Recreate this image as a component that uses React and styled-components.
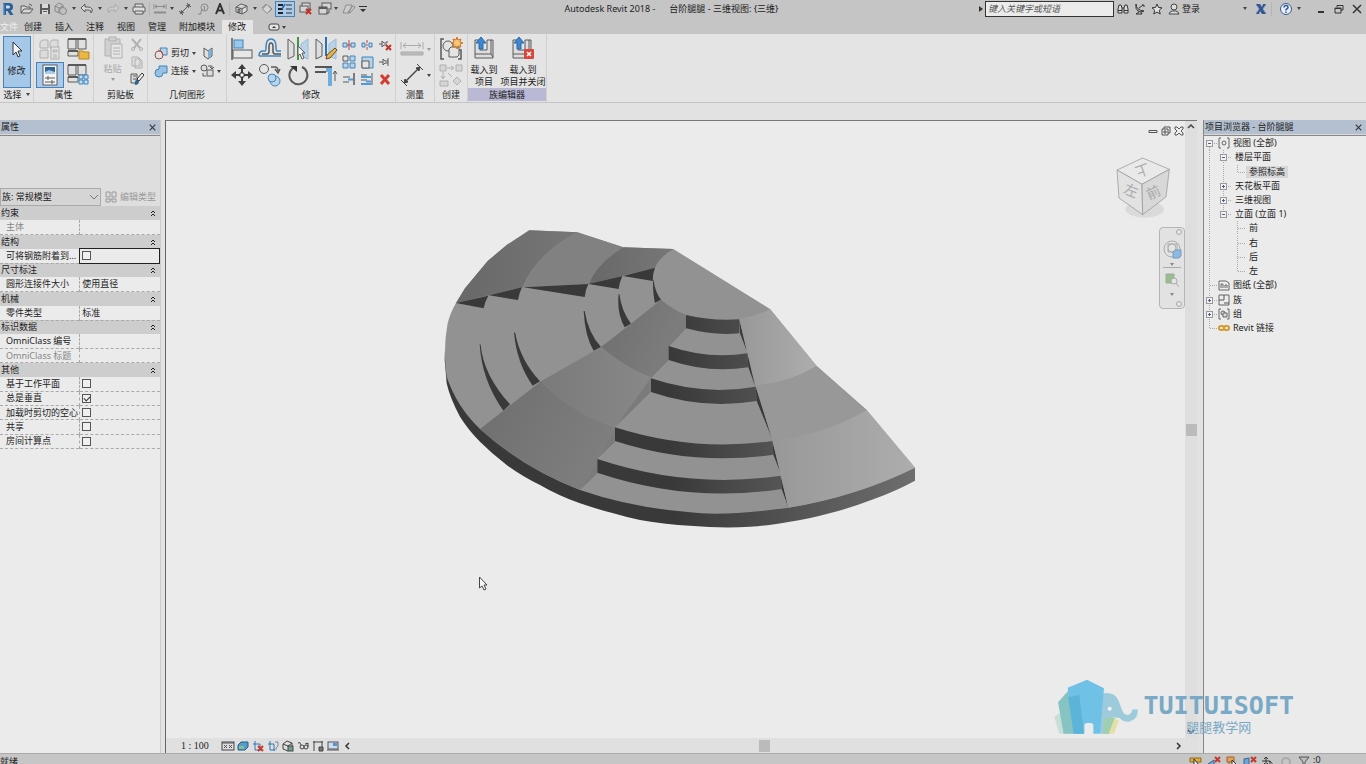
import { useState } from "react";
import styled, { createGlobalStyle } from "styled-components";

const blue = "#3f85bd";
const pale = "#b9d3e8";
const ink = "#5a5a5a";
const off = "#b0b0b0";

// cada ícone: [largura, altura, desenho]
const icons = {
    revit: [14, 14, <g><path d="M2 1h6q4 0 4 4 0 3-2.500 3.500L12.500 13H9L6.500 9H5v4H2z" fill="#28609a" /><path d="M5 3.500h2.500q1.500 0 1.500 1.500T7.500 6.500H5z" fill="#d2dce6" /><path d="M2 1l1.500 1.500V13H2z" fill="#5d9bcc" /></g>],
    open: [14, 12, <path d="M1 10V3h4l1 1h4v2M1 10l3-4h9l-3 4zM9 1l3 1.500" fill="#d8d8d8" stroke={ink} />],
    save: [12, 12, <g><path d="M1 1h9l1 1v9H1z" fill={ink} /><path d="M3 1h6v4H3zM3 7h6v4H3z" fill="#d9d9d9" /><path d="M4 8.500h4" stroke={ink} /></g>],
    package: [14, 14, <g fill="#c0c0c0" stroke="#888"><path d="M1 4l4-3 4 2v6l-4 2-4-2zM1 4l4 2 4-2M5 6v5" /><circle cx="9" cy="9" r="3.500" /></g>],
    undo: [14, 12, <path d="M5 1L1 5l4 4V7h4q2 0 2 3 2-2 1-4-1-2-4-2H5z" fill="#d8d8d8" stroke={ink} />],
    redo: [14, 12, <path d="M9 1l4 4-4 4V7H5q-2 0-2 3-2-2-1-4 1-2 4-2h3z" fill="#ccc" stroke="#aaa" />],
    print: [14, 12, <g fill="#ddd" stroke={ink}><path d="M3 4V1h8v3" /><rect x="1" y="4" width="12" height="5" rx="1" /><path d="M3 8h8v3H3z" /></g>],
    measureTop: [14, 12, <g stroke="#8d8d8d" fill="none"><path d="M1 1v5M13 1v5M2 3.500h10M4 2L2 3.500 4 5M10 2l2 1.500L10 5" /><path d="M1 9.500h12" strokeWidth="2" /></g>],
    dim: [14, 14, <g stroke={ink} fill="none"><path d="M3 11l8-8M1 9l4 4M9 1l4 4" /><path d="M2.500 11.500l1-3 2 2zM11.500 2.500l-3 1 2 2z" fill={ink} /></g>],
    tag: [12, 12, <g stroke="#888" fill="none"><circle cx="7.500" cy="4.500" r="3.500" /><path d="M1 11h3V8l1.500-1.500M6.500 3.500h1V7" /></g>],
    letter: [12, 12, <path d="M2 11L6 1l4 10M3.500 7.500h5" stroke="#333" strokeWidth="2" fill="none" />],
    cube: [14, 12, <g stroke={ink} fill="#ddd"><path d="M1 4l5-3 6 2v5l-5 3-6-2zM1 4l6 2 5-3M7 6v5" /><path d="M3 6v3l2 .5v-3z" fill="#8a9aa8" /></g>],
    section: [12, 12, <path d="M6 1.500L10.500 6 6 10.500 1.500 6zM1 5l4-4M8 3l3 3-3 3" fill="#d5d5d5" stroke="#888" />],
    thinLines: [16, 14, <g fill="none"><path d="M1 3h5M1 7h5M1 11h5" stroke="#222" strokeWidth="2" /><path d="M9 3h6M9 7h6M9 11h6" stroke="#333" /><path d="M5 7l3-5" stroke="#2a69ac" strokeWidth="1.500" /></g>],
    closeHidden: [14, 14, <g fill="#d5d5d5" stroke={ink}><rect x="3" y="1" width="8" height="6" /><rect x="1" y="4" width="8" height="6" /><path d="M7 7l5 5M12 7l-5 5" stroke="#c42f24" strokeWidth="2" /></g>],
    switchWin: [14, 14, <g fill="#d5d5d5" stroke={ink}><rect x="4" y="1" width="9" height="6" /><rect x="1" y="5" width="8" height="7" /><path d="M1 6h8" strokeWidth="2" /><path d="M11 8v3H8" fill="none" /></g>],
    brushTop: [14, 12, <path d="M1 10l3-8h6l-3 8zM6 9l5-6 2 1-5 6z" fill="#ccc" stroke="#8c8c8c" />],
    customise: [8, 8, <path d="M0 1h8v1H0zM1 4h6L4 7z" fill="#333" />],
    play: [6, 8, <path d="M1 1l4 3-4 3z" fill="#333" />],
    binocular: [12, 12, <g fill="#ddd" stroke="#333"><path d="M1 6l1-4h2l1 3v5H1zM11 6l-1-4H8L7 5v5h4zM5 5h2" /><path d="M1 7.500h4M7 7.500h4" /></g>],
    satellite: [12, 12, <g fill="none" stroke="#333"><path d="M2 1q0 6 8 7Q7 10 4 8T2 1zM5 5l4-3M9 1v2h2M5 9l-3 2h6l-1-2" /></g>],
    star: [12, 12, <path d="M6 1l1.500 3.500 3.500.3-2.700 2.400.9 3.800L6 9l-3.200 2 .9-3.800L1 4.800l3.500-.3z" fill="#e3e3e3" stroke="#333" />],
    user: [12, 12, <g fill="#ddd" stroke="#444"><circle cx="6" cy="4" r="3" /><path d="M1 11q1-3 3.500-3h3Q10 8 11 11z" /></g>],
    exchange: [12, 12, <g><path d="M1 1h4l2 3 1-3h3L8 6l3 5H7L5 8l-1 3H1l3-5z" fill="#35558f" /><path d="M1 2l3 4-3 4M11 2L8 6l3 4" stroke="#91a5cb" fill="none" /></g>],
    help: [14, 14, <g><circle cx="7" cy="7" r="5.500" fill="#e9eef4" stroke="#405a8b" /><path d="M5 5.500Q5 3.500 7 3.500t2 2Q9 6.500 7 7.500v1M7 9.500v1.500" fill="none" stroke="#2f5ca3" strokeWidth="1.500" /></g>],
    min: [8, 10, <path d="M1 8h6" stroke="#333" strokeWidth="2" />],
    restore: [10, 10, <path d="M3 3V1.500h6V6H7M1 4h6v5H1zM1 4.500h6" fill="none" stroke="#333" />],
    close: [10, 10, <path d="M1 1l8 8M9 1L1 9" stroke="#333" strokeWidth="1.500" />],
    pointer: [14, 18, <path d="M3 1v13l3-3 2 5 2-1-2-5h4z" fill="#f4f4f4" stroke="#333" />],
    typeGroup: [22, 22, <g fill="#dcdcdc" stroke={off}><path d="M1 4l2-2h6v8H1zM11 4l2-2h6v8h-8zM1 13l2-1h6v8H1z" /><rect x="12" y="9" width="8" height="12" fill="#e3e3e3" /><path d="M14 12h4v2h-4zM14 17h4M14 19h4" /></g>],
    family: [24, 24, <g fill="#e0e0e0" stroke={ink}><path d="M2 2h8v10H2zM12 2h8v10h-8zM2 14h10v5H2z" /><path d="M2 2h18M2 14h10" strokeWidth="2" /><path d="M13 14h4l1 1h5v7H13z" fill="#eab744" stroke="#b58523" /></g>],
    props: [22, 22, <g><rect x="4" y="1" width="14" height="20" fill="#f5f5f5" stroke={ink} /><path d="M6 3h10v7H6z" fill="#2d6596" /><path d="M6 8l4-2 6 2v2H6z" fill="#a9cbe5" /><path d="M6 14h10M6 18h10M9 12v4M13 16v4" stroke={ink} /></g>],
    familyTypes: [24, 24, <g fill="#e0e0e0" stroke={ink}><path d="M2 2h8v10H2zM12 2h8v10h-8zM2 14h10v5H2z" /><path d="M2 2h18M2 14h10" strokeWidth="2" /><path d="M13 12h4v4h-4zM18 12h4v4h-4zM13 17h4v4h-4zM18 17h4v4h-4z" fill="#c3dcf0" stroke={blue} /></g>],
    paste: [20, 24, <g fill="#d0d0d0" stroke={off}><path d="M2 3h15v17H2z" /><path d="M6 1h7v4H6z" /><path d="M8 8h11v14H8z" fill="#e5e5e5" /><path d="M10 12h7M10 15h7M10 18h7" /></g>],
    cut: [14, 14, <g fill="none" stroke={off}><path d="M2 1l8 9M11 1L4 10" strokeWidth="2" /><circle cx="3" cy="11" r="1.500" /><circle cx="11" cy="11" r="1.500" /></g>],
    copy: [14, 14, <path d="M2 2h6l2 2v7H2zM5 4h5l2 2v7H5z" fill="#e0e0e0" stroke={off} />],
    match: [14, 14, <g><path d="M1 2h6v9H1zM3 4h3M3 7h3" fill="#ddd" stroke={ink} /><path d="M12 1L7 7l2 2 5-6z" fill="#f3f3f3" stroke="#333" /><path d="M7 7q-3 2-2 6 4 0 4-4z" fill="#2f6591" /></g>],
    cutGeo: [14, 14, <g><path d="M6 2h7v7H8z" fill={pale} stroke={blue} /><circle cx="5" cy="9" r="4" fill="#e7e0dd" stroke="#875c58" /><path d="M4 4q4 1 5 5" stroke="#c54137" fill="none" /></g>],
    joinGeo: [14, 14, <path d="M5 2h8v7H9q0 4-4 4T1 9q0-4 4-4z" fill="#98c1e2" stroke={blue} />],
    wall: [12, 14, <g><path d="M2 2l4 3 4-3v8l-4 3-4-3z" fill="#e0e0e0" stroke={ink} /><path d="M6 5l3-2v7l-3 2z" fill="#79b2df" /></g>],
    unjoin: [14, 14, <g fill="#ddd" stroke={ink}><circle cx="4" cy="4" r="3" /><rect x="7" y="6" width="6" height="6" /><path d="M8 2h4v3M3 9v3h3M10 3l2 2 2-2" fill="none" /></g>],
    align: [24, 24, <g><path d="M2 1v22" stroke={ink} strokeWidth="1.500" /><rect x="4" y="3" width="9" height="8" fill="#9cc6ea" stroke={blue} /><rect x="3" y="13" width="19" height="8" fill="#e7e7e7" stroke={ink} /></g>],
    offset: [24, 24, <g fill="none"><path d="M1 19h22M1 19q0-5 4-5h2q1 0 1-4 0-8 5-8t5 8q0 4 1 4h4" stroke={blue} strokeWidth="1.500" /><path d="M4 17h5q2 0 2-3v-4q0-4 2-4t2 4v4q0 3 2 3h6" stroke="#555" strokeWidth="1.500" /></g>],
    mirrorPick: [24, 24, <g><path d="M2 2l6 5v12l-6 3z" fill="#dedede" stroke={ink} /><path d="M22 2l-7 5v12l7 3z" fill={pale} stroke="#9db9cf" /><path d="M12 0v23" stroke="#459348" strokeWidth="2" /><path d="M12 9v10l2-2 2 5 2-1-2-5h3z" fill="#f7f7f7" stroke={ink} /></g>],
    mirrorDraw: [24, 24, <g><path d="M2 2l6 5v12l-6 3z" fill="#dedede" stroke={ink} /><path d="M22 2l-7 5v12l7 3z" fill={pale} stroke="#9db9cf" /><path d="M12 0v19" stroke="#2872b8" strokeWidth="2" /><path d="M12 22l1-4 8-7 2 2-7 8z" fill="#e9b44c" stroke="#6b4c20" /></g>],
    move: [24, 24, <g fill="#3d3d3d"><path d="M12 1l4 5h-3v4h-2V6H8zM12 23l4-5h-3v-4h-2v4H8zM1 12l5-4v3h4v2H6v3zM23 12l-5-4v3h-4v2h4v3z" /><path d="M10 10h4v4h-4z" fill="#fff" stroke="#333" /></g>],
    copyObj: [24, 24, <g fill="none" stroke={ink}><circle cx="6" cy="6" r="4.500" /><path d="M13 4h4q3 0 3 4M17 6l3 4 2-4" strokeWidth="1.500" /><circle cx="17" cy="18" r="5" fill={pale} stroke={blue} /><circle cx="14" cy="15" r="4" fill={pale} stroke={blue} /></g>],
    rotate: [24, 24, <g><path d="M7 5a9 9 0 1 0 9-1" fill="none" stroke={ink} strokeWidth="2" /><path d="M4 3h7v6z" fill="#333" /></g>],
    trim: [24, 24, <g fill="none"><path d="M1 4h17M1 9h11" stroke="#555" strokeWidth="2" /><path d="M12 7h4v16" stroke="#6fadde" strokeWidth="4" /><path d="M21 18V8M19 11l2-3 2 3" stroke={ink} /></g>],
    splitEl: [14, 12, <g><path d="M1 4h4v4H1zM9 4h4v4H9z" fill={pale} stroke={blue} /><path d="M7 1v10M5 6h4" stroke="#bd4843" /></g>],
    splitGap: [14, 12, <g><path d="M2 4h3v4H2zM9 4h3v4H9z" fill={pale} stroke={blue} /><path d="M7 1v3M7 8v3M6 6h2" stroke="#bd4843" /></g>],
    unpin: [14, 14, <g fill="none" stroke={ink}><path d="M1 6h3M4 3v6l2-2h3M4 3l2 2h3V3" /><path d="M8 7l5 5M13 7l-5 5" stroke="#c2332a" strokeWidth="2" /></g>],
    array: [14, 14, <g fill={pale} stroke={blue}><path d="M1 1h5v5H1z" fill="#e3e3e3" stroke={ink} /><path d="M8 1h5v5H8zM1 8h5v5H1zM8 8h5v5H8z" /></g>],
    scale: [14, 14, <g><path d="M2 2h11v11H2z" fill={pale} stroke={blue} /><path d="M2 6h7v7H2z" fill="#e5e5e5" stroke={ink} /></g>],
    pin: [14, 14, <path d="M1 7h4M5 4v6l2-2h3v3M5 4l2 2h3V3M10 6v2" fill="none" stroke={ink} />],
    trimOne: [14, 14, <g><path d="M12 1v12" stroke={ink} strokeWidth="1.500" /><path d="M1 5h7M1 10h6" stroke={ink} /><path d="M6 7.500h5" stroke="#509bd7" strokeWidth="2" /></g>],
    trimMany: [14, 14, <g><path d="M12 1v12M1 3h6M1 8h6" stroke={ink} /><path d="M1 5h10M6 9.500h5M1 12h10" stroke="#509bd7" strokeWidth="2" /></g>],
    remove: [14, 14, <path d="M3 3l8 9M11 3l-8 9" stroke="#d43c31" strokeWidth="3" />],
    measure: [24, 16, <g stroke="#aaa" fill="none"><path d="M1 1v7M23 1v7M3 4.500h18M6 2L3 4.500 6 7M18 2l3 2.500L18 7" /><path d="M1 11h22v3H1z" fill="#bebebe" /></g>],
    dimBig: [24, 24, <g stroke="#444" fill="none"><path d="M4 20L20 4" strokeWidth="1.500" /><path d="M1 17l6 6M17 1l6 6" /><path d="M4 20l1-4 3 3zM20 4l-4 1 3 3z" fill="#444" /></g>],
    create: [24, 24, <g fill="#e3e3e3" stroke={ink}><path d="M5 2H2v20h3M19 13h3v9h-3" fill="none" strokeWidth="1.500" /><circle cx="9" cy="9" r="5" /><path d="M10 12l2-2h8v8l-2 2h-8z" /><path d="M18 0l1 3 3-1-1 3 3 1-3 1 1 3-3-1-1 3-1-3-3 1 1-3-3-1 3-1-1-3 3 1z" fill="#f3c779" stroke="#d17525" /></g>],
    similar: [24, 24, <g fill="#d5d5d5" stroke={off}><path d="M1 2h6v6H1zM17 2h6v6h-6zM1 18h8v5H1zM18 14l4 4-4 4-4-4z" /><path d="M8 5h6M12 3l3 2-3 2M4 9v6M2 13l2 3 2-3M9 10l4 4" fill="none" /></g>],
    load: [24, 24, <g><path d="M3 4h5v10h7V4h6v18H3z" fill="#ddd" stroke={ink} /><path d="M3 18h16V4M19 18l2 3" stroke={ink} fill="none" /><path d="M9 1l5 6h-3v6H7V7H4z" fill="#3d87ce" stroke="#286aaa" /></g>],
    loadClose: [26, 24, <g><path d="M3 4h5v10h7V4h6v18H3z" fill="#ddd" stroke={ink} /><path d="M3 18h16V4" stroke={ink} fill="none" /><path d="M9 1l5 6h-3v6H7V7H4z" fill="#3d87ce" stroke="#286aaa" /><rect x="14" y="13" width="10" height="10" rx="1" fill="#d9463b" /><path d="M17 16l4 4M21 16l-4 4" stroke="#fff" strokeWidth="1.500" /></g>],
    ribbonToggle: [12, 8, <g><rect x="1" y="1" width="10" height="6" rx="2" fill="#e4e4e4" stroke="#444" /><path d="M4 5l2-2 2 2z" fill="#333" /></g>],
    editType: [12, 12, <path d="M1 1h4v5H1zM7 1h4v5H7zM1 8h4v3H1zM7 8h4v3H7zM5 8h2" fill="#ddd" stroke="#999" />],
    up2: [6, 6, <path d="M1 3l2-2 2 2M1 6l2-2 2 2" fill="none" stroke="#222" />],
    down: [10, 8, <path d="M1 2l4 4 4-4" fill="none" stroke="#777" />],
    arrowUp: [8, 8, <path d="M1 5l3-3 3 3" fill="none" stroke="#444" strokeWidth="1.500" />],
    arrowDown: [8, 8, <path d="M1 2l3 3 3-3" fill="none" stroke="#444" strokeWidth="1.500" />],
    arrowLeft: [8, 8, <path d="M5 1L2 4l3 3" fill="none" stroke="#333" strokeWidth="1.500" />],
    arrowRight: [8, 8, <path d="M2 1l3 3-3 3" fill="none" stroke="#333" strokeWidth="1.500" />],
    viewMin: [10, 10, <path d="M1 4.500h8v2H1z" fill="#eee" stroke="#555" />],
    viewRestore: [10, 10, <path d="M3 3V1h6v6H7M1 3h6v6H1zM3 5h2v2H3z" fill="none" stroke="#555" />],
    viewClose: [10, 10, <path d="M1 1h2l2 2 2-2h2v2L7 5l2 2v2H7L5 7 3 9H1V7l2-2-2-2z" fill="#eee" stroke="#555" />],
    detail: [14, 10, <g><rect x="1" y="1" width="12" height="8" fill="#ddd" stroke="#444" /><path d="M1 2h12M3 4l3 3M6 4L3 7M8 4l3 3M11 4L8 7" stroke="#555" /></g>],
    visual: [12, 12, <g><path d="M1 5l3-3h7v5l-3 3H1z" fill="#559bc2" stroke="#245d8a" /><path d="M2 6h5v3H2z" fill="#7fc196" /></g>],
    crop: [12, 12, <g fill="none"><path d="M3 1v9h5M1 4h7v7" stroke="#3277b4" /><path d="M6 6l5 5M11 6l-5 5" stroke="#c5382d" strokeWidth="2" /></g>],
    cropShow: [12, 12, <g fill="none" stroke="#3277b4"><path d="M3 1v9h5M1 4h6v7" /><path d="M8 2h3v4L9 8v2" stroke="#7b8793" /></g>],
    lock3d: [12, 12, <g fill="#ddd" stroke="#444"><path d="M1 4l4-3 5 2v5l-4 3-5-2zM1 4l5 2 4-3" /><rect x="6" y="6" width="5" height="5" fill="#6f9f89" /></g>],
    glasses: [12, 12, <g fill="none" stroke="#444"><path d="M1 3q2-2 3 2M8 4l3-1v4" /><circle cx="5" cy="7" r="2" /><circle cx="9" cy="7" r="2" /></g>],
    reveal: [12, 12, <g fill="none" stroke="#444"><path d="M1 2h10M2 1v10M10 1v6" /><path d="M7 7h4v4H7z" fill="#777" /></g>],
    display: [12, 10, <g><rect x="1" y="1" width="10" height="7" fill="#cde" stroke="#555" /><path d="M6 2h4v3H6z" fill="#5b91c4" /><path d="M0 9h12" stroke="#555" /></g>],
    views: [12, 12, <g fill="none" stroke="#666"><path d="M3 1H1v10h2M9 1h2v10H9" /><circle cx="6" cy="6" r="2" /></g>],
    sheets: [12, 12, <path d="M1 2h7l3 2v7H1zM3 5v4M3 5h2v4M7 9V6h2v3" fill="#eee" stroke="#666" />],
    families: [12, 12, <g><path d="M1 1h10v10H1z" fill="#eee" stroke="#666" /><path d="M6 1v5H1M6 9h5" fill="none" stroke="#555" /></g>],
    groups: [12, 12, <g fill="#ddd" stroke="#666"><path d="M3 1H1v10h2M9 1h2v10H9" fill="none" /><circle cx="5" cy="5" r="2" /><path d="M5 5h4v4H5z" /></g>],
    link: [12, 12, <g fill="none" stroke="#d59b28" strokeWidth="2"><rect x="1" y="4" width="5" height="4" rx="2" /><rect x="6" y="4" width="5" height="4" rx="2" /></g>],
    selLink: [14, 12, <g><path d="M1 2h11v4H1z" fill="#e2ae35" stroke="#8b6a1c" /><path d="M5 3v8l2-2h3z" fill="#eee" stroke="#333" /></g>],
    selUnder: [14, 12, <g><path d="M1 8l6-4v5z" fill="#6da7d9" stroke="#346692" /><path d="M8 1l5 5M13 1L8 6" stroke="#c5382d" strokeWidth="2" /></g>],
    selPin: [14, 12, <g><path d="M2 1h7v5H2zM4 6v6" fill="#e4a25d" stroke="#a65c27" /><path d="M7 4v7l2-2h3z" fill="#eee" stroke="#333" /></g>],
    selFace: [14, 12, <g><path d="M1 3l5-1v9l-5-1z" fill="#6da7d9" stroke="#346692" /><path d="M8 1l5 5M13 1L8 6" stroke="#c5382d" strokeWidth="2" /></g>],
    drag: [14, 12, <path d="M5 1v8M1 5h8M3 3l2-2 2 2M3 7l2 2 2-2M9 5v7l2-2h2z" fill="#eee" stroke="#333" />],
    gear: [12, 12, <circle cx="6" cy="6" r="4" fill="none" stroke="#aaa" strokeWidth="2" />],
    filter: [12, 12, <path d="M1 1h10L7 6v5L5 9V6z" fill="#bbb" stroke="#555" />],
};

function Icon({ name }) {
    const [width, height, drawing] = icons[name];
    return <svg width={width} height={height} viewBox={`0 0 ${width} ${height}`} aria-hidden="true">{drawing}</svg>;
}

// barra de acesso rápido: [ícone, rótulo, largura]
const quickTools = [
    ["revit", "应用程序", 16], ["open", "打开", 22], ["save", "保存", 13], ["package", "同步", 20], ["caret", "同步选项", 6],
    ["undo", "放弃", 20], ["caret", "放弃列表", 6], ["redo", "重做", 20], ["caret", "重做列表", 6], ["print", "打印", 20], ["sep", "", 2],
    ["measureTop", "测量", 18], ["caret", "测量选项", 6], ["dim", "尺寸标注", 20], ["tag", "标记", 16], ["letter", "文字", 18], ["sep", "", 4],
    ["cube", "三维视图", 18], ["caret", "三维选项", 8], ["section", "剖面", 16], ["thinLines", "细线", 20],
    ["closeHidden", "关闭隐藏窗口", 22], ["switchWin", "切换窗口", 16], ["caret", "窗口列表", 6], ["brushTop", "编辑", 20], ["customise", "自定义", 8],
];

const tabs = ["创建", "插入", "注释", "视图", "管理", "附加模块", "修改"];

const modifyLarge = [["align", "对齐"], ["offset", "偏移"], ["mirrorPick", "镜像拾取轴"], ["mirrorDraw", "镜像绘制轴"], ["move", "移动"], ["copyObj", "复制"], ["rotate", "旋转"], ["trim", "修剪"]];
const modifySmall = [["splitEl", "拆分"], ["splitGap", "间隙拆分"], ["unpin", "解锁"], ["array", "阵列"], ["scale", "缩放"], ["pin", "锁定"], ["trimOne", "修剪单个"], ["trimMany", "修剪多个"], ["remove", "删除"]];

const properties = [
    { group: "约束" },
    { label: "主体", value: "", muted: true },
    { group: "结构" },
    { label: "可将钢筋附着到...", check: false, focused: true },
    { group: "尺寸标注" },
    { label: "圆形连接件大小", value: "使用直径" },
    { group: "机械" },
    { label: "零件类型", value: "标准" },
    { group: "标识数据" },
    { label: "OmniClass 编号", value: "" },
    { label: "OmniClass 标题", value: "", muted: true },
    { group: "其他" },
    { label: "基于工作平面", check: false },
    { label: "总是垂直", check: true },
    { label: "加载时剪切的空心", check: false },
    { label: "共享", check: false },
    { label: "房间计算点", check: false },
];

const tree = [
    { guides: ["first-minus"], icon: "views", text: "视图 (全部)" },
    { guides: ["line", "minus"], text: "楼层平面" },
    { guides: ["line", "line", "end"], text: "参照标高", selected: true },
    { guides: ["line", "plus"], text: "天花板平面" },
    { guides: ["line", "plus"], text: "三维视图" },
    { guides: ["line", "last-minus"], text: "立面 (立面 1)" },
    { guides: ["line", "none", "tee"], text: "前" },
    { guides: ["line", "none", "tee"], text: "右" },
    { guides: ["line", "none", "tee"], text: "后" },
    { guides: ["line", "none", "end"], text: "左" },
    { guides: ["tee"], icon: "sheets", text: "图纸 (全部)" },
    { guides: ["plus"], icon: "families", text: "族" },
    { guides: ["plus"], icon: "groups", text: "组" },
    { guides: ["end"], icon: "link", text: "Revit 链接" },
];

const viewTools = [["detail", "详细程度"], ["visual", "视觉样式"], ["crop", "裁剪视图"], ["cropShow", "显示裁剪区域"], ["lock3d", "锁定三维视图"], ["glasses", "临时隐藏"], ["reveal", "显示隐藏图元"], ["display", "临时视图属性"], ["arrowLeft", "向左滚动"]];
const statusTools = [["selLink", "选择链接"], ["selUnder", "选择基线图元"], ["selPin", "选择锁定图元"], ["selFace", "按面选择"], ["drag", "选择时拖拽"], ["gear", "后台进程"], ["filter", "过滤器"]];

function ToolButton({ name, label, ...rest }) {
    return <IconButton aria-label={label} {...rest}>{name === "caret" ? <Caret /> : <Icon name={name} />}</IconButton>;
}

function Guide({ kind }) {
    const box = kind.endsWith("plus") || kind.endsWith("minus");
    const top = kind === "none" || kind === "first-minus" ? 7 : 0;
    const bottom = kind === "end" || kind === "last-minus" || kind === "none" ? 7 : 15;
    return <svg width="14" height="14" viewBox="0 0 14 14" aria-hidden="true">
        {kind !== "none" && <path d={`M5.500 ${top}V${bottom}`} stroke="#aaa" strokeDasharray="1 1" />}
        {kind !== "line" && kind !== "none" && <path d="M6 7.500h8" stroke="#aaa" strokeDasharray="1 1" />}
        {box && <rect x="2.500" y="4.500" width="6" height="6" fill="#f2f2f2" stroke="#999" />}
        {box && <path d="M4 7.500h3" stroke="#4a5f8c" />}
        {kind.endsWith("plus") && <path d="M5.500 6v3" stroke="#4a5f8c" />}
    </svg>;
}

function StairModel() {
    return <Scene viewBox="166 121 1019 617" preserveAspectRatio="xMidYMid slice" role="img" aria-label="三维视图">
        <defs>
            <linearGradient id="rim" gradientUnits="userSpaceOnUse" x1="700" x2="1425" y1="0" y2="0"><stop offset="0" stopColor="#393939" /><stop offset="1" stopColor="#6e6e6e" /></linearGradient>
            <linearGradient id="riser" gradientUnits="userSpaceOnUse" x1="690" x2="1020" y1="0" y2="0"><stop offset="0" stopColor="#393939" /><stop offset="1" stopColor="#555" /></linearGradient>
            <linearGradient id="back"><stop offset="0" stopColor="#686868" /><stop offset="1" stopColor="#777" /></linearGradient>
            <linearGradient id="slope" x2="1" y2=".4"><stop offset="0" stopColor="#6e6e6e" /><stop offset="1" stopColor="#7e7e7e" /></linearGradient>
            <linearGradient id="slopeMid"><stop offset="0" stopColor="#7a7a7a" /><stop offset="1" stopColor="#888" /></linearGradient>
            <linearGradient id="light"><stop offset="0" stopColor="#989898" /><stop offset="1" stopColor="#adadad" /></linearGradient>
        </defs>
        <g transform="translate(440 220) scale(.33333)">
            <path fill="url(#rim)" d="M15 390L14 420 20 490Q30 535 60 590 85 630 120 665 155 700 200 735 245 768 300 795 355 827 420 850 470 867 520 880 560 892 600 900 680 914 750 917 850 926 930 920 1000 915 1045 906 1110 896 1160 882 1230 865 1300 838 1370 812 1425 782V743L1045 800 400 700z" />
            <path fill="#929292" d="M48 249L75 205 143 123 200 75 268 31 412 37 550 82 700 87 990 267 1130 438 1280 570 1425 743Q1250 828 1045 863 850 890 750 877 570 862 420 810 250 745 120 627 50 560 20 470 8 390 23 310 30 280 48 249z" />
            <path fill="url(#back)" d="M48 249L75 205 143 123 200 75 268 31 412 37Q290 100 248 202L147 226z" />
            <path fill="#818181" d="M412 37L550 82Q470 130 447 192L250 202Q290 100 412 37z" />
            <path fill="url(#back)" d="M550 82L700 87Q655 115 645 143L447 192Q470 130 550 82z" />
            <g fill="#393939">
                <path d="M48 249L145 227Q134 246 131 265zM147 226L246 202Q237 220 234 240zM250 202L445 192Q436 210 434 231zM445 192L547 168Q538 188 536 207zM549 168L645 143Q638 160 638 183z" />
                <path d="M119 372Q125 480 190 572L210 553Q130 465 122 374zM222 337Q230 430 278 497L300 484Q240 420 226 340zM431 273Q435 350 461 392L483 381Q445 340 434 273zM536 222Q530 280 554 322L573 311Q545 275 538 222zM639 178Q638 220 645 249L663 239Q645 215 641 183z" />
            </g>
            <path fill="url(#slope)" d="M663 239Q700 270 738 284V325L686 380V420L633 473Q550 440 483 381L573 311z" />
            <path fill="url(#slopeMid)" d="M483 381L303 484Q400 583 525 622L633 473Q550 440 483 381z" />
            <path fill="url(#slope)" d="M303 484L120 627Q250 745 420 810L525 622Q400 583 303 484z" />
            <path fill="#7b7b7b" d="M738 284V325L686 380zM686 378V420L633 473zM633 473V515L525 622zM525 622V665L472 717zM472 717V760L420 810z" />
            <path fill="url(#riser)" d="M738 285Q820 304 898 298V340Q820 347 738 325zM686 378Q805 419 922 400L925 442Q805 461 686 420zM633 475Q790 528 947 500L950 543Q790 570 633 516zM525 622Q760 697 997 663L1000 704Q760 739 525 663zM472 717Q747 808 1022 767L1025 807Q747 850 472 758z" />
            <path fill="#393939" d="M898 298L920 392 900 340zM922 400L945 497 925 442zM947 500L996 655 950 543zM997 663L1022 760 1000 704zM1022 767L1045 862 1025 807z" />
            <path fill="url(#light)" d="M898 297Q950 288 990 267L1130 438Q1050 488 947 497z" />
            <path fill="#989898" d="M947 497Q1050 488 1130 438L1280 570Q1150 645 997 660z" />
            <path fill="url(#light)" d="M997 660Q1150 645 1280 570L1425 743Q1250 830 1045 863z" />
        </g>
        <path d="M479.500 577v11l2.500-2 2 4 2-1-2-4h3z" fill="#f7f7f7" stroke="#444" />
    </Scene>;
}

function ViewCube() {
    return <Cube width="64" height="76" viewBox="0 0 192 228" aria-label="前 左 上">
        <ellipse cx="98" cy="172" rx="58" ry="25" fill="#cfcfcf" opacity=".6" />
        <g stroke="#8f8f8f" strokeWidth="2">
            <path d="M15 54L92 18 172 52 90 97z" fill="#e9e9e9" />
            <path d="M15 54L90 97 92 188 21 138z" fill="#e2e2e2" />
            <path d="M90 97L172 52 162 135 92 188z" fill="#d8d8d8" />
        </g>
        <g fill="#aaa" fontSize="42">
            <text transform="translate(106 34) rotate(160)">上</text>
            <text transform="translate(32 122) rotate(22)">左</text>
            <text transform="translate(112 144) rotate(-25)">前</text>
        </g>
    </Cube>;
}

function Watermark() {
    return <Brand>
        <svg width="88" height="58" viewBox="0 0 264 174" aria-hidden="true">
            <path d="M7 120l40-32 18 82H22z" fill="#c9ded7" />
            <path d="M18 76l30-34 36 0 12 128H35z" fill="#86c4c3" />
            <path d="M146 50q42-8 53 20l14 36q10 14 22 4 7-6 4-12l18-1q3 26-20 35-18 8-34-9l-20-2-12 49h-28z" fill="#9ecbdc" />
            <path d="M158 122h32l-16 48h-20z" fill="#9fcfb0" />
            <path d="M188 124l12 6-14 40h-16z" fill="#e4e0a4" />
            <path d="M47 32l58-24 51 26-12 136H124v-24q0-8-8-8h-10q-9 0-9 8v24H65z" fill="#70c1e6" />
            <path d="M48 60l34-6 14 116H65z" fill="#4caccc" opacity=".55" />
            <circle cx="173" cy="95" r="6" fill="#f3f7f8" />
        </svg>
        <BrandText>
            <BrandName>TUITUISOFT</BrandName>
            <BrandSub>腿腿教学网</BrandSub>
        </BrandText>
    </Brand>;
}

function PropertyRow({ item, onToggle }) {
    if (item.group) {
        return <GroupRow><th colSpan="2" scope="colgroup"><GroupTitle>{item.group}<Icon name="up2" /></GroupTitle></th></GroupRow>;
    }
    const id = `prop-${item.label}`;
    const isCheck = item.check !== undefined;
    return <ValueRow $muted={item.muted}>
        <th scope="row">{isCheck ? <label htmlFor={id}>{item.label}</label> : item.label}</th>
        <ValueCell $focused={item.focused}>
            {isCheck ? <CheckBox id={id} type="checkbox" checked={item.check} onChange={onToggle} /> : item.value}
        </ValueCell>
    </ValueRow>;
}

export default function App() {
    const [rows, setRows] = useState(properties);
    const [activeTab, setActiveTab] = useState("修改");

    function toggle(index) {
        setRows(rows.map((row, i) => i === index ? { ...row, check: !row.check } : row));
    }

    return <Page>
        <GlobalStyle />
        <TitleBar>
            {quickTools.map(([name, label, width], i) => name === "sep"
                ? <TitleSeparator key={i} $w={width} />
                : <ToolButton key={i} name={name} label={label} $w={width} $active={name === "thinLines"} />)}
            <WindowTitle><span>Autodesk Revit 2018 -</span><span>台阶腿腿 - 三维视图: {"{三维}"}</span></WindowTitle>
            <ToolButton name="play" label="展开" $w={9} />
            <SearchBox aria-label="搜索" placeholder="键入关键字或短语" />
            <ToolButton name="binocular" label="查找" $w={17} />
            <ToolButton name="satellite" label="通讯中心" $w={17} />
            <ToolButton name="star" label="收藏夹" $w={17} />
            <ToolButton name="user" label="用户" $w={17} />
            <LoginButton>登录</LoginButton>
            <ToolButton name="caret" label="登录选项" $w={10} />
            <ToolButton name="exchange" label="应用商店" $w={21} />
            <TitleSeparator $w={4} />
            <ToolButton name="help" label="帮助" $w={21} />
            <ToolButton name="caret" label="帮助选项" $w={6} />
            <WindowControls>
                <ToolButton name="min" label="最小化" $w={18} />
                <ToolButton name="restore" label="还原" $w={18} />
                <ToolButton name="close" label="关闭" $w={18} />
            </WindowControls>
        </TitleBar>

        <TabBar>
            <FileTab>文件</FileTab>
            {tabs.map(tab => <Tab key={tab} $active={tab === activeTab} onClick={() => setActiveTab(tab)}>{tab}</Tab>)}
            <RibbonToggle aria-label="功能区显示"><Icon name="ribbonToggle" /><Caret /></RibbonToggle>
        </TabBar>

        <Ribbon>
            <Panel $w={34}>
                <PanelBody><ModifyButton><Icon name="pointer" />修改</ModifyButton></PanelBody>
                <PanelTitle>选择<Caret /></PanelTitle>
            </Panel>
            <Panel $w={60}>
                <PanelBody>
                    <ToolGrid $cols={2} $cell={28} $row={26}>
                        <ToolButton name="typeGroup" label="类型属性" />
                        <ToolButton name="family" label="族类别" />
                        <ToolButton name="props" label="属性" $active />
                        <ToolButton name="familyTypes" label="族类型" />
                    </ToolGrid>
                </PanelBody>
                <PanelTitle>属性</PanelTitle>
            </Panel>
            <Panel $w={54}>
                <PanelBody>
                    <PasteButton><Icon name="paste" />粘贴<Caret $muted /></PasteButton>
                    <ToolGrid $cols={1} $cell={16} $row={17}>
                        <ToolButton name="cut" label="剪切" />
                        <ToolButton name="copy" label="复制" />
                        <ToolButton name="match" label="匹配类型" />
                    </ToolGrid>
                </PanelBody>
                <PanelTitle>剪贴板</PanelTitle>
            </Panel>
            <Panel $w={79}>
                <PanelBody>
                    <GeometryTools>
                        <TextTool><Icon name="cutGeo" />剪切<Caret /></TextTool>
                        <ToolButton name="wall" label="墙洞口" $w={20} />
                        <TextTool><Icon name="joinGeo" />连接<Caret /></TextTool>
                        <TextTool aria-label="取消连接"><Icon name="unjoin" /><Caret /></TextTool>
                    </GeometryTools>
                </PanelBody>
                <PanelTitle>几何图形</PanelTitle>
            </Panel>
            <Panel $w={169}>
                <PanelBody>
                    <ToolGrid $cols={4} $cell={28} $row={26}>
                        {modifyLarge.map(([name, label]) => <ToolButton key={name} name={name} label={label} />)}
                    </ToolGrid>
                    <ToolGrid $cols={3} $cell={18} $row={17}>
                        {modifySmall.map(([name, label]) => <ToolButton key={name} name={name} label={label} />)}
                    </ToolGrid>
                </PanelBody>
                <PanelTitle>修改</PanelTitle>
            </Panel>
            <Panel $w={39}>
                <PanelBody>
                    <MeasureTools>
                        <TextTool aria-label="测量"><Icon name="measure" /><Caret $muted /></TextTool>
                        <TextTool aria-label="对齐标注"><Icon name="dimBig" /><Caret /></TextTool>
                    </MeasureTools>
                </PanelBody>
                <PanelTitle>测量</PanelTitle>
            </Panel>
            <Panel $w={33}>
                <PanelBody>
                    <ToolGrid $cols={1} $cell={28} $row={26}>
                        <ToolButton name="create" label="创建组" />
                        <ToolButton name="similar" label="创建类似" />
                    </ToolGrid>
                </PanelBody>
                <PanelTitle>创建</PanelTitle>
            </Panel>
            <Panel $w={79}>
                <PanelBody>
                    <LoadButton $w={32}><Icon name="load" /><span>载入到</span><span>项目</span></LoadButton>
                    <LoadButton $w={46}><Icon name="loadClose" /><span>载入到</span><span>项目并关闭</span></LoadButton>
                </PanelBody>
                <PanelTitle $accent>族编辑器</PanelTitle>
            </Panel>
        </Ribbon>
        <OptionsBar />

        <Workspace>
            <PropertiesPalette>
                <PaletteHeader>属性<ToolButton name="close" label="关闭属性" $small /></PaletteHeader>
                <TypePreview />
                <TypeRow>
                    <TypeSelect aria-label="类型" defaultValue="generic"><option value="generic">族: 常规模型</option></TypeSelect>
                    <SelectArrow><Icon name="down" /></SelectArrow>
                    <EditTypeButton disabled><Icon name="editType" />编辑类型</EditTypeButton>
                </TypeRow>
                <PropertyTable>
                    <colgroup><col width="50%" /><col width="50%" /></colgroup>
                    <tbody>
                        {rows.map((item, i) => <PropertyRow key={i} item={item} onToggle={() => toggle(i)} />)}
                    </tbody>
                </PropertyTable>
            </PropertiesPalette>

            <CanvasColumn>
                <CanvasRow>
                    <Canvas>
                        <StairModel />
                        <CanvasControls>
                            <ToolButton name="viewMin" label="最小化视图" $w={13} />
                            <ToolButton name="viewRestore" label="还原视图" $w={13} />
                            <ToolButton name="viewClose" label="关闭视图" $w={13} />
                        </CanvasControls>
                        <ViewCube />
                        <NavBar>
                            <svg width="24" height="80" viewBox="0 0 24 80" aria-hidden="true">
                                <g fill="#e4e4e4" stroke="#aaa">
                                    <circle cx="19" cy="4" r="2.500" />
                                    <circle cx="19" cy="76" r="2.500" />
                                    <circle cx="12" cy="21" r="8" />
                                    <path d="M8 16h9v8H8z" />
                                    <circle cx="12" cy="20" r="4" />
                                    <path d="M3 39.500h18" />
                                    <path d="M13 24l2-2h6v6l-2 2h-6z" fill="#8eb9e2" stroke="#739bc2" />
                                    <path d="M6 46h8v9H6z" fill="#98bd8e" stroke="#9aae94" />
                                    <circle cx="14" cy="53" r="3" /><path d="M16 55l3 4" />
                                </g>
                                <path d="M10 35h4l-2 3zM10 65h4l-2 3z" fill="#888" />
                            </svg>
                        </NavBar>
                    </Canvas>
                    <VerticalScroll><Icon name="arrowUp" /><ScrollThumb /><Icon name="arrowDown" /></VerticalScroll>
                </CanvasRow>
                <ViewBar>
                    <ViewScale>1 : 100</ViewScale>
                    {viewTools.map(([name, label]) => <ToolButton key={name} name={name} label={label} $w={15} />)}
                    <HorizontalTrack><ScrollThumb /></HorizontalTrack>
                    <ToolButton name="arrowRight" label="向右滚动" $w={12} />
                    <Corner />
                </ViewBar>
            </CanvasColumn>

            <BrowserPalette>
                <PaletteHeader>项目浏览器 - 台阶腿腿<ToolButton name="close" label="关闭浏览器" $small /></PaletteHeader>
                <Tree>
                    {tree.map(node => <TreeRow key={node.text}>
                        {node.guides.map((kind, i) => <Guide key={i} kind={kind} />)}
                        {node.icon && <Icon name={node.icon} />}
                        <TreeText $selected={node.selected}>{node.text}</TreeText>
                    </TreeRow>)}
                </Tree>
            </BrowserPalette>
            <Watermark />
        </Workspace>

        <StatusBar>
            <StatusText>就绪</StatusText>
            <StatusTools>
                {statusTools.map(([name, label]) => <ToolButton key={name} name={name} label={label} $w={18} />)}
                <span>:0</span>
            </StatusTools>
        </StatusBar>
    </Page>;
}

const GlobalStyle = createGlobalStyle`
    * { box-sizing: border-box; }
    body { margin: 0; }
    body, button, input, select {
        font-family: "Noto Sans", "Noto Sans CJK SC", sans-serif;
        font-size: 9px;
        line-height: 12px;
        color: #222;
    }
    svg { display: block; flex: none; }
`;

const Page = styled.div`
    display: flex;
    flex-direction: column;
    height: 100vh;
    overflow: hidden;
    background: #e2e2e2;
`;

const BareButton = styled.button`
    display: flex;
    align-items: center;
    justify-content: center;
    padding: 0;
    border: 0;
    background: none;
    white-space: nowrap;
`;

const IconButton = styled(BareButton)`
    flex: none;
    width: ${({ $w }) => $w ? `${$w}px` : "auto"};
    height: ${({ $w }) => $w ? "16px" : "auto"};
    ${({ $active }) => $active && "background: #a9caeb; box-shadow: inset 0 0 0 1px #4782b8;"}
    ${({ $small }) => $small && "svg { width: 7px; height: 7px; }"}
`;

const Caret = styled.i`
    flex: none;
    border: 2px solid transparent;
    border-top: 3px solid ${({ $muted }) => $muted ? "#999" : "#444"};
    border-bottom: 0;
`;

const TitleBar = styled.header`
    display: flex;
    align-items: center;
    flex: none;
    height: 17px;
    background: #c5c5c5;
`;

const TitleSeparator = styled.div`
    flex: none;
    width: ${({ $w }) => $w}px;
    height: 14px;
    border-left: 1px solid #b5b5b5;
`;

const WindowTitle = styled.div`
    display: flex;
    flex: 1;
    justify-content: center;
    gap: 14px;
    white-space: nowrap;
`;

const SearchBox = styled.input`
    flex: none;
    width: 129px;
    height: 16px;
    padding: 0 2px;
    border: 1px solid #333;
    background: #ebebeb;
    font-style: italic;

    &::placeholder {
        color: #555;
    }
`;

const LoginButton = styled(BareButton)`
    justify-content: flex-start;
    width: 58px;
`;

const WindowControls = styled.div`
    display: flex;
    padding-left: 10px;
`;

const TabBar = styled.nav`
    display: flex;
    flex: none;
    height: 17px;
    padding-top: 3px;
    background: #c5c5c5;
`;

const Tab = styled(BareButton)`
    padding: 0 7px 0 6px;
    background: ${({ $active }) => $active ? "#e5e5e5" : "none"};
`;

const FileTab = styled(BareButton)`
    color: #eee;
`;

const RibbonToggle = styled(BareButton)`
    gap: 2px;
    margin-left: 15px;
`;

const Ribbon = styled.div`
    display: flex;
    flex: none;
    height: 69px;
    background: #e4e4e4;
    border-bottom: 1px solid #c4c4c4;
`;

const Panel = styled.section`
    display: flex;
    flex-direction: column;
    flex: none;
    width: ${({ $w }) => $w}px;
    border-right: 1px solid #d0d0d0;
`;

const PanelBody = styled.div`
    display: flex;
    justify-content: center;
    height: 54px;
    padding-top: 2px;
`;

const PanelTitle = styled.div`
    display: flex;
    align-items: center;
    justify-content: center;
    gap: 4px;
    height: 13px;
    background: ${({ $accent }) => $accent ? "#b9b9d6" : "none"};
`;

const ModifyButton = styled(BareButton)`
    flex-direction: column;
    justify-content: flex-start;
    gap: 6px;
    width: 28px;
    height: 52px;
    padding-top: 4px;
    background: #a6c8e8;
    border: 1px solid #4782b8;
`;

const ToolGrid = styled.div`
    display: grid;
    grid-template-columns: repeat(${({ $cols }) => $cols}, ${({ $cell }) => $cell}px);
    grid-auto-rows: ${({ $row }) => $row}px;
`;

const PasteButton = styled(BareButton)`
    flex-direction: column;
    justify-content: flex-start;
    gap: 3px;
    width: 32px;
    color: #aaa;
`;

const GeometryTools = styled.div`
    display: grid;
    grid-template-columns: 46px 24px;
    grid-auto-rows: 18px;
    align-content: center;
    align-items: center;
`;

const TextTool = styled(BareButton)`
    gap: 3px;
`;

const MeasureTools = styled.div`
    display: grid;
    grid-auto-rows: 26px;
`;

const LoadButton = styled(BareButton)`
    flex-direction: column;
    justify-content: flex-start;
    width: ${({ $w }) => $w}px;

    svg {
        margin-bottom: 4px;
    }
`;

const OptionsBar = styled.div`
    flex: none;
    height: 17px;
`;

const Workspace = styled.main`
    position: relative;
    display: flex;
    flex: 1;
    gap: 4px;
    min-height: 0;
`;

const PropertiesPalette = styled.aside`
    flex: none;
    width: 161px;
    border-right: 1px solid #ccc;
    background: #ebebeb;
`;

const PaletteHeader = styled.h2`
    display: flex;
    align-items: center;
    justify-content: space-between;
    height: 15px;
    margin: 0;
    padding: 0 4px 0 1px;
    background: #b4c0d0;
    border-bottom: 1px solid #d8d8d8;
    font-size: 9px;
    font-weight: normal;
`;

const TypePreview = styled.div`
    height: 53px;
    background: #dedede;
    border-top: 1px solid #888;
`;

const TypeRow = styled.div`
    display: flex;
    height: 18px;
    background: #dedede;
`;

const TypeSelect = styled.select`
    appearance: none;
    width: 101px;
    padding: 0 1px;
    border: 1px solid #aaa;
    border-radius: 0;
    background: #d5d5d5;
`;

const SelectArrow = styled.span`
    display: flex;
    align-items: center;
    width: 12px;
    margin-left: -12px;
    pointer-events: none;
`;

const EditTypeButton = styled(BareButton)`
    flex: 1;
    gap: 3px;
    color: #999;
`;

const PropertyTable = styled.table`
    table-layout: fixed;
    width: 100%;
    height: 243px;
    border-collapse: collapse;

    th, td {
        height: 14px;
        padding: 0;
        font-weight: normal;
        text-align: left;
        white-space: nowrap;
    }
`;

const GroupRow = styled.tr`
    background: #cdcdcd;
`;

const GroupTitle = styled.div`
    display: flex;
    align-items: center;
    justify-content: space-between;
    padding: 0 4px 0 1px;
`;

const ValueRow = styled.tr`
    color: ${({ $muted }) => $muted ? "#888" : "#222"};
    border-bottom: 1px dashed #aaa;

    th {
        padding-left: 6px;
        overflow: hidden;
    }
`;

const ValueCell = styled.td`
    && {
        padding-left: 2px;
        border-left: 1px dashed #aaa;
        ${({ $focused }) => $focused && "border: 1px solid #222;"}
    }
`;

const CheckBox = styled.input`
    appearance: none;
    display: block;
    width: 9px;
    height: 9px;
    margin: 0;
    border: 1px solid #555;
    background: #f0f0f0;

    &:checked::after {
        content: "";
        display: block;
        width: 5px;
        height: 3px;
        margin: 1px;
        border: solid #333;
        border-width: 0 0 1px 1px;
        transform: rotate(-45deg);
    }
`;

const CanvasColumn = styled.div`
    display: flex;
    flex-direction: column;
    flex: 1;
    min-width: 0;
    margin-right: 2px;
    border-top: 1px solid #777;
    border-left: 1px solid #666;
`;

const CanvasRow = styled.div`
    display: flex;
    flex: 1;
    min-height: 0;
`;

const Canvas = styled.div`
    position: relative;
    flex: 1;
    min-width: 0;
    background: #ebebeb;
`;

const Scene = styled.svg`
    width: 100%;
    height: 100%;
`;

const CanvasControls = styled.div`
    position: absolute;
    top: 2px;
    right: 0;
    display: flex;
`;

const Cube = styled.svg`
    position: absolute;
    top: 31px;
    right: 9px;
`;

const NavBar = styled.div`
    position: absolute;
    top: 106px;
    right: 0;
    border: 1px solid #b5b5b5;
    border-radius: 4px;
    background: #e2e2e2;
`;

const VerticalScroll = styled.div`
    display: flex;
    flex-direction: column;
    align-items: center;
    justify-content: space-between;
    flex: none;
    width: 12px;
    padding: 2px 0;
    background: #dedede;
`;

const ScrollThumb = styled.div`
    width: 11px;
    height: 12px;
    background: #bbb;
`;

const ViewBar = styled.div`
    display: flex;
    align-items: center;
    flex: none;
    height: 15px;
    background: #e0e0e0;
`;

const ViewScale = styled.span`
    width: 54px;
    padding-left: 15px;
    font-family: "Liberation Serif", serif;
    font-size: 10px;
`;

const HorizontalTrack = styled.div`
    display: flex;
    flex: 1;
    justify-content: center;
`;

const Corner = styled.div`
    width: 12px;
`;

const BrowserPalette = styled.aside`
    flex: none;
    width: 163px;
    background: #ebebeb;
    border-left: 1px solid #888;
`;

const Tree = styled.ul`
    display: flex;
    flex-direction: column;
    height: 200px;
    margin: 0;
    padding: 0;
    border-top: 1px solid #888;
    list-style: none;
`;

const TreeRow = styled.li`
    display: flex;
    align-items: center;
    flex: 1;
    min-height: 0;
`;

const TreeText = styled.span`
    padding: 0 3px;
    background: ${({ $selected }) => $selected ? "#d6d6d6" : "none"};
    white-space: nowrap;
`;

const Brand = styled.div`
    position: absolute;
    right: 72px;
    bottom: 18px;
    display: flex;
    align-items: flex-start;
    gap: 3px;
    pointer-events: none;
    color: #79a9c4;
`;

const BrandText = styled.div`
    display: flex;
    flex-direction: column;
    align-items: center;
    padding-top: 16px;
`;

const BrandName = styled.strong`
    font: bold 25px/26px "DejaVu Sans Mono", monospace;
`;

const BrandSub = styled.span`
    font-size: 13px;
    line-height: 16px;
`;

const StatusBar = styled.footer`
    display: flex;
    align-items: flex-start;
    justify-content: space-between;
    flex: none;
    height: 11px;
    border-top: 1px solid #aaa;
    background: #c6c6c6;
    overflow: hidden;
`;

const StatusText = styled.span`
    padding-top: 2px;
`;

const StatusTools = styled.div`
    display: flex;
    width: 179px;
`;
